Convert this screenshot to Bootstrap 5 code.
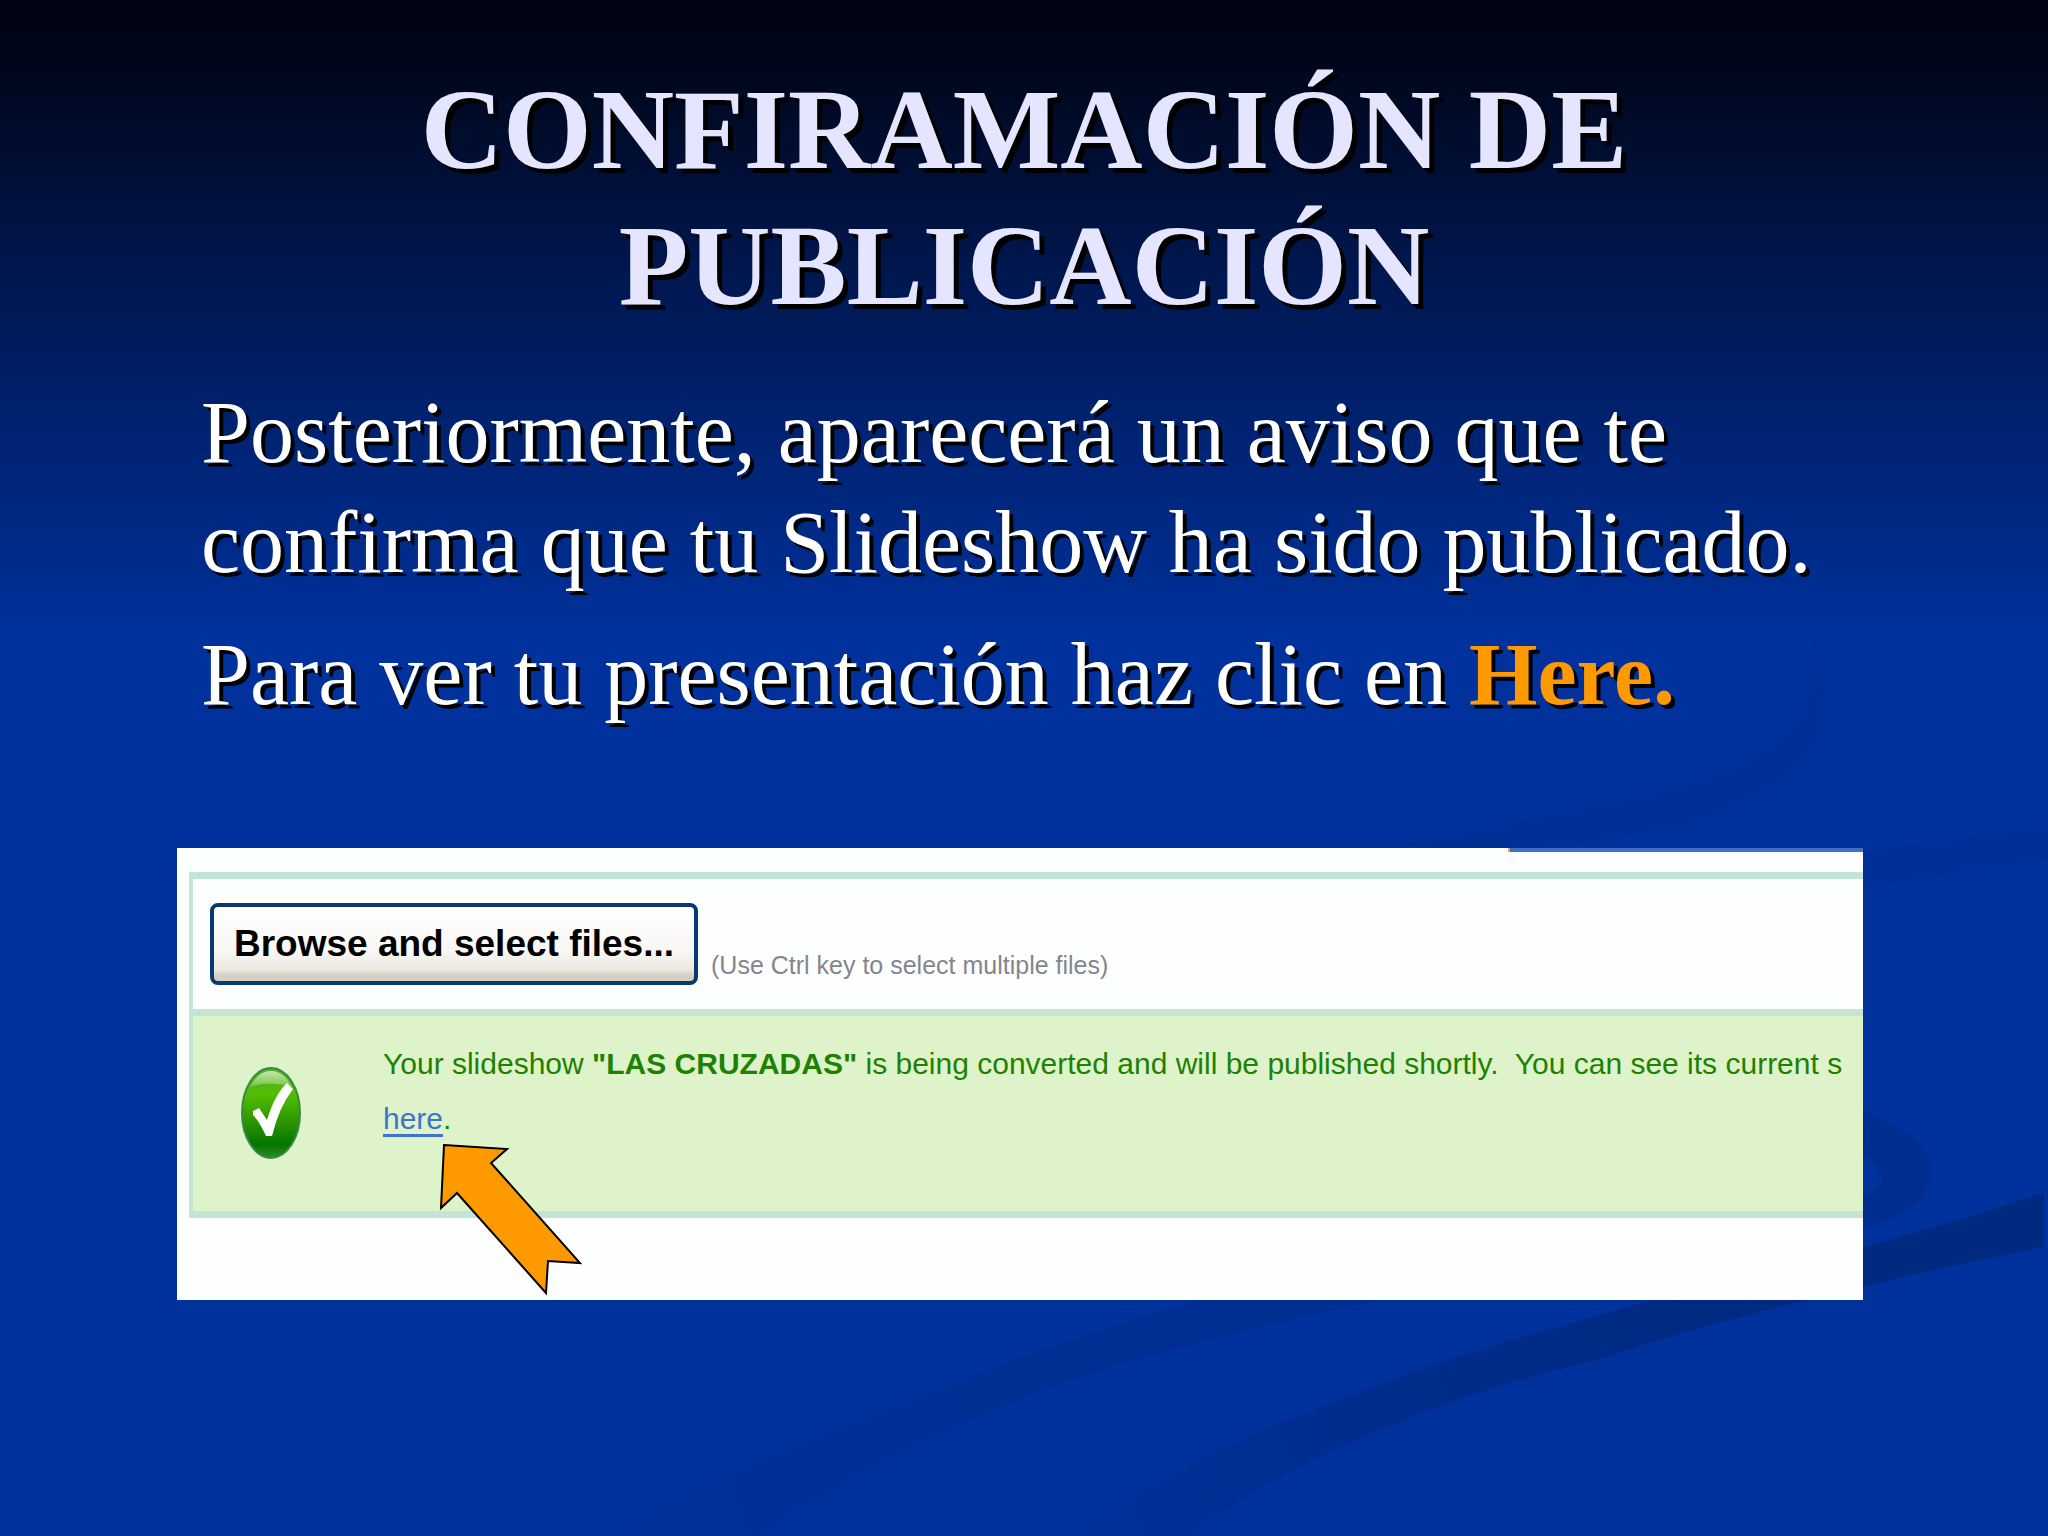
<!DOCTYPE html>
<html lang="es">
<head>
<meta charset="utf-8">
<meta name="viewport" content="width=device-width, initial-scale=1">
<title>Confiramación de publicación</title>
<link href="https://cdn.jsdelivr.net/npm/bootstrap@5.3.0/dist/css/bootstrap.min.css" rel="stylesheet">
<style>
  body { background: #00319c; }
  .slide {
    padding: 62px 185px 0 177px;
    background: linear-gradient(#000310 0, #00081f 80px, #001a58 310px, #00319c 640px);
    font-family: "Liberation Serif", serif;
  }
  .swooshes { z-index: 0; }
  .slide-content { z-index: 1; }
  .slide-title {
    padding-left: 8px;
    color: #e5e5ff;
    font-size: 114px;
    line-height: 136px;
    text-shadow: 5px 5px 0 #000;
  }
  .slide-text {
    padding: 44px 0 0 24px;
    color: #fff;
    font-size: 88px;
    line-height: 110px;
    text-shadow: 4px 4px 0 #000;
  }
  .slide-text p { margin-bottom: 22px; }
  .slide-text strong { color: #f90; }
  .capture {
    margin-top: 118px;
    height: 452px;
    padding: 24px 0 0 12px;
    background: #fdfffe;
    font-family: "Liberation Sans", sans-serif;
  }
  .tab-edge { width: 355px; height: 4px; background: #4170c6; border-left: 2px solid #e0a060; }
  .upload { border: solid #c3e5d6; border-width: 7px 0 7px 4px; }
  .picker { height: 130px; padding: 24px 0 0 17px; }
  .browse {
    width: 488px;
    height: 82px;
    padding: 0;
    border: 4px solid #063a70;
    border-radius: 8px;
    background: linear-gradient(#fff 0, #f8f7f4 60%, #ece8e0 85%, #d6cec3 93%);
    color: #000;
    font-size: 37px;
    font-weight: 700;
    line-height: 72px;
  }
  .hint { margin: 44px 0 0 13px; color: #85858c; font-size: 25px; line-height: 36px; }
  .notice { height: 202px; border-top: 7px solid #c3e5d6; background: #dff3ca; color: #1d8200; }
  .tick { width: 61px; height: 93px; margin: 51px 0 0 48px; }
  .message { margin: 20px 0 0 81px; font-size: 30px; line-height: 55px; }
  .message a { color: #3f74cc; text-decoration-thickness: 3px; text-underline-offset: 5px; }
  .pointer { left: 262px; top: 294px; width: 144px; height: 154px; }
</style>
<script src="https://cdn.jsdelivr.net/npm/bootstrap@5.3.0/dist/js/bootstrap.bundle.min.js"></script>
</head>
<body>
<main class="slide position-relative min-vh-100 overflow-hidden">
  <svg class="swooshes position-absolute top-0 start-0 w-100 h-100" viewBox="0 0 2048 1536" preserveAspectRatio="none" aria-hidden="true">
    <defs>
      <linearGradient id="fadeA" gradientUnits="userSpaceOnUse" x1="1750" y1="1250" x2="1130" y2="1536">
        <stop offset="0" stop-color="#002a80"/><stop offset=".5" stop-color="#002c8a"/><stop offset="1" stop-color="#003098"/>
      </linearGradient>
      <linearGradient id="fadeB" gradientUnits="userSpaceOnUse" x1="1400" y1="1280" x2="680" y2="1536">
        <stop offset="0" stop-color="#002e90"/><stop offset="1" stop-color="#003098"/>
      </linearGradient>
    </defs>
    <path fill="url(#fadeB)" d="M620 1536Q700 1480 900 1405Q1040 1345 1200 1300Q1500 1240 1700 1220Q1880 1210 1882 1180Q1880 1150 1800 1130V1095Q1930 1120 1932 1174Q1925 1212 1863 1228Q1600 1255 1380 1300Q1140 1350 1020 1400Q850 1470 760 1536Z"/>
    <path fill="url(#fadeA)" d="M2044 1192Q1960 1222 1863 1247Q1750 1274 1653 1300Q1520 1336 1412 1372Q1310 1410 1246 1438Q1140 1486 1075 1536H1190Q1235 1500 1310 1462Q1370 1432 1430 1410Q1510 1380 1590 1362Q1700 1325 1808 1300L1863 1287Q1950 1265 2044 1247Z"/>
    <path fill="#003096" d="M1400 846Q1560 816 1690 786Q1800 752 1812 690Q1820 660 1808 630Q1832 680 1818 735Q1790 790 1690 822Q1600 842 1510 850Z"/>
    <path fill="#003097" d="M1863 852Q1960 842 2048 826V858Q1960 870 1863 887Z"/>
  </svg>

  <div class="slide-content position-relative">
    <h1 class="slide-title text-center fw-bold m-0">CONFIRAMACIÓN DE<br>PUBLICACIÓN</h1>

    <div class="slide-text">
      <p>Posteriormente, aparecerá un aviso que te confirma que tu Slideshow ha sido publicado.</p>
      <p class="mb-0">Para ver tu presentación haz clic en <strong>Here.</strong></p>
    </div>

    <section class="capture position-relative">
      <div class="tab-edge position-absolute top-0 end-0"></div>
      <div class="upload overflow-hidden">
        <div class="picker d-flex align-items-start">
          <button type="button" class="browse text-nowrap">Browse and select files...</button>
          <span class="hint text-nowrap">(Use Ctrl key to select multiple files)</span>
        </div>
        <div class="notice d-flex align-items-start">
          <svg class="tick flex-shrink-0" viewBox="0 0 61 93" aria-hidden="true">
            <defs>
              <linearGradient id="ball" x1="0" y1="0" x2="0" y2="1">
                <stop offset="0" stop-color="#4fae35"/><stop offset=".3" stop-color="#52bd00"/><stop offset=".6" stop-color="#2b9600"/><stop offset=".85" stop-color="#057500"/><stop offset="1" stop-color="#2a8a2a"/>
              </linearGradient>
              <linearGradient id="shine" x1="0" y1="0" x2="0" y2="1">
                <stop offset="0" stop-color="#c5e6b4"/><stop offset="1" stop-color="#74c63c"/>
              </linearGradient>
            </defs>
            <ellipse cx="30" cy="46" rx="29" ry="45" fill="url(#ball)" stroke="#3b8a44" stroke-width="2"/>
            <path d="M9 20Q17 4 30 4T51 20Q30 13 9 20Z" fill="url(#shine)"/>
            <path d="M12 44L18 41L26 53Q34 27 46 16L52 22Q38 40 31 69H25Q18 54 12 48Z" fill="#fff"/>
          </svg>
          <p class="message text-nowrap">Your slideshow <b>"LAS CRUZADAS"</b> is being converted and will be published shortly.&nbsp; You can see its current s<br><a href="#">here</a>.</p>
        </div>
      </div>
      <svg class="pointer position-absolute" viewBox="439 1142 144 154" aria-hidden="true">
        <path d="M444 1145L507 1149L491 1163L580 1263L548 1261L546 1293L457 1193L441 1208Z" fill="#f90" stroke="#000" stroke-width="2"/>
      </svg>
    </section>
  </div>
</main>
</body>
</html>
